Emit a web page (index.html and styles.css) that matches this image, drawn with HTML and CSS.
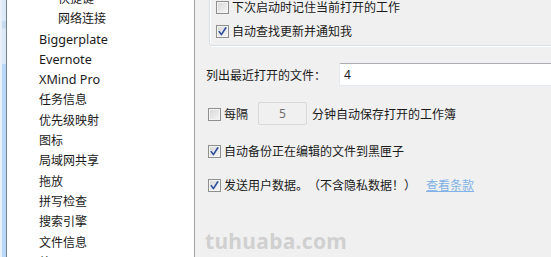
FILE: index.html
```html
<!DOCTYPE html>
<html lang="zh-CN">
<head>
<meta charset="utf-8">
<title>选项</title>
<link rel="stylesheet" href="styles.css">
</head>
<body>
<div class="window">
  <div class="frame"><div class="frame-top"></div><div class="frame-bottom"></div></div>
  <ul class="tree">
    <li class="child">快捷键</li>
    <li class="child">网络连接</li>
    <li class="latin">Biggerplate</li>
    <li class="latin">Evernote</li>
    <li class="latin">XMind Pro</li>
    <li>任务信息</li>
    <li>优先级映射</li>
    <li>图标</li>
    <li>局域网共享</li>
    <li>拖放</li>
    <li>拼写检查</li>
    <li>搜索引擎</li>
    <li>文件信息</li>
    <li>外观</li>
  </ul>
  <div class="panel">
    <div class="group">
      <label class="row"><span class="cb"></span><span>下次启动时记住当前打开的工作</span></label>
      <label class="row"><span class="cb checked"><svg viewBox="0 0 13 13" width="13" height="13"><path d="M3.2 6.6 L5.4 9.6 L9.8 2.8" fill="none" stroke="#2d4e9e" stroke-width="1.6" stroke-linecap="round" stroke-linejoin="round"/></svg></span><span>自动查找更新并通知我</span></label>
    </div>
    <div class="recent">
      <span class="recent-label">列出最近打开的文件：</span>
      <span class="input">4</span>
    </div>
    <div class="autosave">
      <span class="cb"></span><span class="txt">每隔</span>
      <span class="spin">5</span>
      <span class="txt">分钟自动保存打开的工作簿</span>
    </div>
    <label class="row opt backup"><span class="cb checked"><svg viewBox="0 0 13 13" width="13" height="13"><path d="M3.2 6.6 L5.4 9.6 L9.8 2.8" fill="none" stroke="#2d4e9e" stroke-width="1.6" stroke-linecap="round" stroke-linejoin="round"/></svg></span><span>自动备份正在编辑的文件到黑匣子</span></label>
    <label class="row opt send"><span class="cb checked"><svg viewBox="0 0 13 13" width="13" height="13"><path d="M3.2 6.6 L5.4 9.6 L9.8 2.8" fill="none" stroke="#2d4e9e" stroke-width="1.6" stroke-linecap="round" stroke-linejoin="round"/></svg></span><span>发送用户数据。（不含隐私数据！）</span><a class="link" href="#">查看条款</a></label>
    <div class="watermark">tuhuaba.com</div>
  </div>
</div>
</body>
</html>
```

FILE: styles.css
```css
html, body {
  margin: 0;
  padding: 0;
  width: 551px;
  height: 257px;
  overflow: hidden;
  background: #f0f0f0;
}
body {
  font-family: "Noto Sans", "Noto Sans CJK SC", sans-serif;
  font-size: 12px;
  color: #1a1a1a;
  text-spacing-trim: space-all;
}
.window {
  display: flex;
  height: 257px;
  overflow: hidden;
}
.frame {
  width: 6px;
  flex: none;
  display: flex;
  flex-direction: column;
  border-right: 1px solid #6f7f90;
  background: #e9f0f8;
}
.frame-top {
  height: 64px;
  margin-left: 2px;
  background: linear-gradient(#dde9f6 0, #dde9f6 20px, #c7d9ee 22px, #c7d9ee 27px, #dde9f6 30px, #dde9f6 64px);
}
.frame-bottom {
  flex: 1;
  margin-left: 2px;
  background: #bad9fa;
}
.tree {
  list-style: none;
  margin: 0;
  padding: 0;
  width: 187px;
  flex: none;
  background: #fff;
  border-right: 1px solid #a3a3a3;
  overflow: hidden;
}
.tree li {
  height: 20.3px;
  line-height: 20.3px;
  padding-left: 32px;
  white-space: nowrap;
}
.tree li:first-child {
  margin-top: -11px;
}
.tree li.child {
  padding-left: 51px;
}
.tree li.latin {
  font-size: 12.6px;
}
.panel {
  flex: 1;
  position: relative;
  overflow: hidden;
  background: #f0f0f0;
}
.group {
  margin: -40px -10px 0 14px;
  padding: 34px 0 2px 6px;
  border: 1px solid #d5dfe5;
  border-radius: 3px;
  box-shadow: inset 1px 1px 0 #fff, 1px 1px 0 #fff;
}
.row {
  display: flex;
  align-items: center;
  height: 24px;
  white-space: nowrap;
}
.cb {
  width: 11px;
  height: 11px;
  flex: none;
  border: 1px solid #8e8f8f;
  background: linear-gradient(135deg, #d6d6d6, #f7f7f7);
  box-shadow: inset 0 0 0 1px #f4f4f4;
  margin-right: 3px;
  position: relative;
}
.cb svg {
  position: absolute;
  left: -1px;
  top: -1px;
}
.recent {
  display: flex;
  align-items: center;
  margin: 17px 0 0 11px;
  height: 23px;
  white-space: nowrap;
}
.recent-label {
  width: 133px;
  flex: none;
}
.input {
  flex: none;
  width: 250px;
  height: 21px;
  line-height: 21px;
  box-sizing: content-box;
  padding-left: 4px;
  background: #fff;
  border: 1px solid #e3e9ef;
  border-top-color: #abadb3;
  border-radius: 2px 0 0 2px;
}
.autosave {
  display: flex;
  align-items: center;
  margin: 16px 0 0 13px;
  height: 23px;
  white-space: nowrap;
}
.autosave .cb {
  margin-top: 2px;
}
.spin {
  flex: none;
  width: 47px;
  height: 21px;
  line-height: 21px;
  text-align: center;
  margin: 0 5px 0 10px;
  border: 1px solid #d9d9d9;
  border-radius: 2px;
  background: #f0f0f0;
  color: #6d6d6d;
}
.opt {
  height: 20px;
  margin-left: 13px;
}
.backup {
  margin-top: 16px;
}
.send {
  margin-top: 14px;
}
.link {
  margin-left: 10px;
  color: #7fb2e6;
  text-decoration: underline;
}
.watermark {
  position: absolute;
  left: 10px;
  top: 227px;
  font-family: "Noto Sans", sans-serif;
  font-weight: bold;
  font-size: 21px;
  letter-spacing: 0.3px;
  color: #d0d0d0;
}
```
